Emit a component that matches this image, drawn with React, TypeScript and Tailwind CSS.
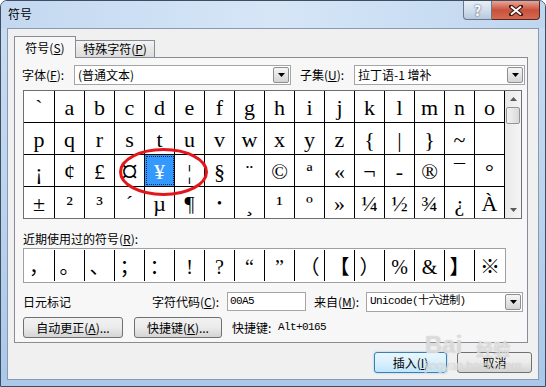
import React from 'react';

const grid = [
  ['`', 'a', 'b', 'c', 'd', 'e', 'f', 'g', 'h', 'i', 'j', 'k', 'l', 'm', 'n', 'o'],
  ['p', 'q', 'r', 's', 't', 'u', 'v', 'w', 'x', 'y', 'z', '{', '|', '}', '~', ''],
  ['¡', '¢', '£', '¤', '¥', '¦', '§', '¨', '©', 'ª', '«', '¬', '-', '®', '¯', '°'],
  ['±', '²', '³', '´', 'µ', '¶', '•', '¸', '¹', 'º', '»', '¼', '½', '¾', '¿', 'À'],
];

const recent = ['，', '。', '、', '；', '：', '!', '?', '“', '”', '（', '【', '）', '%', '&', '】', '※'];

function DropButton() {
  return (
    <div className="ml-auto flex h-[16px] w-[16px] items-center justify-center rounded-[2px] border border-[#8e8f8f] bg-gradient-to-b from-[#f6f6f6] to-[#d4d4d4]">
      <svg width="7" height="4" viewBox="0 0 7 4">
        <path d="M0 0h7L3.5 4z" fill="#000" />
      </svg>
    </div>
  );
}

function Select({ width, text, mono }: { width: string; text: string; mono?: boolean }) {
  return (
    <div className={`${width} flex h-[20px] items-center border border-[#a5a5a5] bg-white pl-[3px] pr-[1px]`}>
      <span
        className={
          mono
            ? "font-['Liberation_Mono','Noto_Sans_CJK_SC',monospace] text-[11px] tracking-[-0.6px]"
            : 'text-[12px]'
        }
      >
        {text}
      </span>
      <DropButton />
    </div>
  );
}

function Button({ width, children, primary }: { width: string; children: React.ReactNode; primary?: boolean }) {
  return (
    <div
      className={`${width} flex h-[21px] items-center justify-center rounded-[3px] border text-[12px] ${
        primary
          ? 'border-[#3c7fb1] bg-gradient-to-b from-[#eaf6fd] via-[#d9f0fc] to-[#bee6fd] shadow-[0_0_2px_#7ec3ef]'
          : 'border-[#707070] bg-gradient-to-b from-[#f2f2f2] via-[#ebebeb] to-[#d4d4d4]'
      }`}
    >
      {children}
    </div>
  );
}

function App() {
  return (
    <div className="relative flex h-[387px] w-[546px] flex-col overflow-hidden rounded-t-[7px] border border-[#3f4d60] bg-gradient-to-b from-[#c9ddf3] via-[#bcd4ee] to-[#a9c8ea] font-['Noto_Sans_CJK_SC',sans-serif] text-black">
      {/* Title bar */}
      <div className="flex h-[27px] items-start justify-between bg-gradient-to-r from-[#c3d8f0] via-[#d6e6f7] to-[#bfd6ef]">
        <span className="pl-[7px] pt-[5px] text-[12px] leading-[16px]">符号</span>
        <div className="mr-[5px] flex">
          <div className="flex h-[19px] w-[29px] items-center justify-center rounded-bl-[4px] border border-t-0 border-[#6a7788] bg-gradient-to-b from-[#e7eef7] via-[#d2deec] to-[#b8c9dc] text-[14px] font-bold leading-none text-white [text-shadow:0_0_2px_#1e2c40]">
            ?
          </div>
          <div className="flex h-[19px] w-[48px] items-center justify-center rounded-br-[4px] border border-l-0 border-t-0 border-[#5c2420] bg-gradient-to-b from-[#e8a597] via-[#c8513d] to-[#d56a50]">
            <svg width="14" height="11" viewBox="0 0 14 11">
              <path d="M2 1.5L12 9.5M12 1.5L2 9.5" stroke="#3a1510" strokeWidth="4" strokeLinecap="square" />
              <path d="M2 1.5L12 9.5M12 1.5L2 9.5" stroke="#fff" strokeWidth="2" />
            </svg>
          </div>
        </div>
      </div>

      {/* Client area */}
      <div className="mx-[6px] mb-[6px] flex flex-1 flex-col border border-[#8a99ad] bg-[#f0f0f0] text-[12px]">
        {/* Tabs */}
        <div className="flex h-[28px] items-end pl-[6px]">
          <div className="relative z-10 -mb-px flex h-[22px] w-[62px] items-center justify-center border border-b-0 border-[#898c95] bg-[#f7f7f7]">
            符号(<u>S</u>)
          </div>
          <div className="-ml-px flex h-[17px] w-[80px] items-center justify-center border border-b-0 border-[#898c95] bg-gradient-to-b from-[#f3f3f3] to-[#dcdcdc]">
            特殊字符(<u>P</u>)
          </div>
        </div>

        {/* Panel */}
        <div className="ml-[6px] flex h-[286px] w-[514px] flex-col border border-[#898c95] bg-[#f7f7f7]">
          <div className="mt-[7px] flex items-center">
            <span className="ml-[7px] w-[52px]">字体(<u>F</u>):</span>
            <Select width="w-[217px]" text="(普通文本)" />
            <span className="ml-[9px] w-[54px]">子集(<u>U</u>):</span>
            <Select width="w-[171px]" text="拉丁语-1 增补" />
          </div>

          {/* Symbol grid */}
          <div className="relative ml-[8px] mt-[5px] flex w-[499px] border border-[#6f6f6f] bg-white">
            <div className="flex flex-col font-['Liberation_Serif',serif] text-[22px] leading-none">
              {grid.map((row, r) => (
                <div key={r} className={`flex ${r < 3 ? 'h-[32px] border-b border-black' : 'h-[31px]'}`}>
                  {row.map((ch, c) => {
                    const selected = r === 2 && c === 4;
                    const big = ch === '¤';
                    const dot = ch === '•';
                    return (
                      <div
                        key={c}
                        className={`flex items-center justify-center border-r border-black pt-[2px] ${
                          c === 0 ? 'w-[31px]' : 'w-[30px]'
                        } ${big ? 'text-[34px]' : ''} ${dot ? 'text-[14px]' : ''} ${
                          selected ? 'bg-[#3399ff] text-white outline-1 outline-dotted outline-offset-[-2px] outline-[#0a2a5a]' : ''
                        }`}
                      >
                        {ch}
                      </div>
                    );
                  })}
                </div>
              ))}
            </div>
            {/* Scrollbar */}
            <div className="flex w-[16px] flex-col bg-gradient-to-r from-[#e9e9e9] to-[#f5f5f5]">
              <div className="flex h-[16px] items-center justify-center">
                <svg width="7" height="4" viewBox="0 0 7 4">
                  <path d="M0 4h7L3.5 0z" fill="#5a5a5a" />
                </svg>
              </div>
              <div className="mx-[1px] h-[17px] rounded-[2px] border border-[#959595] bg-gradient-to-r from-[#f3f3f3] to-[#d9d9d9]" />
              <div className="flex-1" />
              <div className="flex h-[16px] items-center justify-center">
                <svg width="7" height="4" viewBox="0 0 7 4">
                  <path d="M0 0h7L3.5 4z" fill="#5a5a5a" />
                </svg>
              </div>
            </div>
            <svg className="pointer-events-none absolute left-0 top-0" width="499" height="129">
              <ellipse cx="139.5" cy="81" rx="43" ry="22.5" fill="none" stroke="#e3161b" strokeWidth="3" />
            </svg>
          </div>

          <div className="ml-[8px] mt-[12px] h-[16px] leading-[16px]">近期使用过的符号(<u>R</u>):</div>

          {/* Recent symbols */}
          <div className="ml-[8px] mt-[1px] flex h-[35px] w-[483px] border border-[#a0a0a0] bg-white py-[1px] font-['Liberation_Serif','Noto_Sans_CJK_SC',serif] text-[20px] leading-none">
            {recent.map((ch, i) => (
              <div
                key={i}
                className={`flex items-center justify-center pt-[3px] ${i === 0 ? 'w-[31px]' : 'w-[30px]'} ${
                  i < 15 ? 'border-r border-black' : ''
                }`}
              >
                {ch}
              </div>
            ))}
          </div>

          <div className="ml-[8px] mt-[9px] flex h-[19px] items-center">
            <span className="w-[129px]">日元标记</span>
            <span className="w-[75px]">字符代码(<u>C</u>):</span>
            <div className="flex h-[19px] w-[79px] items-center border border-[#a5a5a5] bg-white pl-[2px] font-['Liberation_Mono',monospace] text-[11px] tracking-[-0.6px]">
              00A5
            </div>
            <span className="ml-[8px] w-[52px]">来自(<u>M</u>):</span>
            <Select width="w-[157px]" text="Unicode(十六进制)" mono />
          </div>

          <div className="ml-[8px] mt-[6px] flex items-center">
            <Button width="w-[100px]">自动更正(<u>A</u>)...</Button>
            <div className="ml-[11px]">
              <Button width="w-[88px]">快捷键(<u>K</u>)...</Button>
            </div>
            <span className="ml-[10px] w-[46px]">快捷键:</span>
            <span className="font-['Liberation_Mono',monospace] text-[11px] tracking-[-0.6px]">Alt+0165</span>
          </div>
        </div>

        {/* Dialog buttons */}
        <div className="mt-[9px] flex justify-end gap-[10px] pr-[6px]">
          <Button width="w-[73px]" primary>
            插入(<u>I</u>)
          </Button>
          <Button width="w-[75px]">取消</Button>
        </div>
      </div>

      {/* Watermark */}
      <div className="pointer-events-none absolute left-[424px] top-[332px] flex flex-col items-start text-white/50 [text-shadow:0_0_1px_#b4b4b4]">
        <div className="flex items-end gap-[14px]">
          <span className="font-['Liberation_Sans',sans-serif] text-[24px] font-bold leading-none">Bai</span>
          <span className="text-[17px] font-bold leading-none">经验</span>
        </div>
        <span className="mt-[3px] font-['Liberation_Sans',sans-serif] text-[12px] leading-none">jingyan.baidu.com</span>
      </div>
    </div>
  );
}

export default App;
